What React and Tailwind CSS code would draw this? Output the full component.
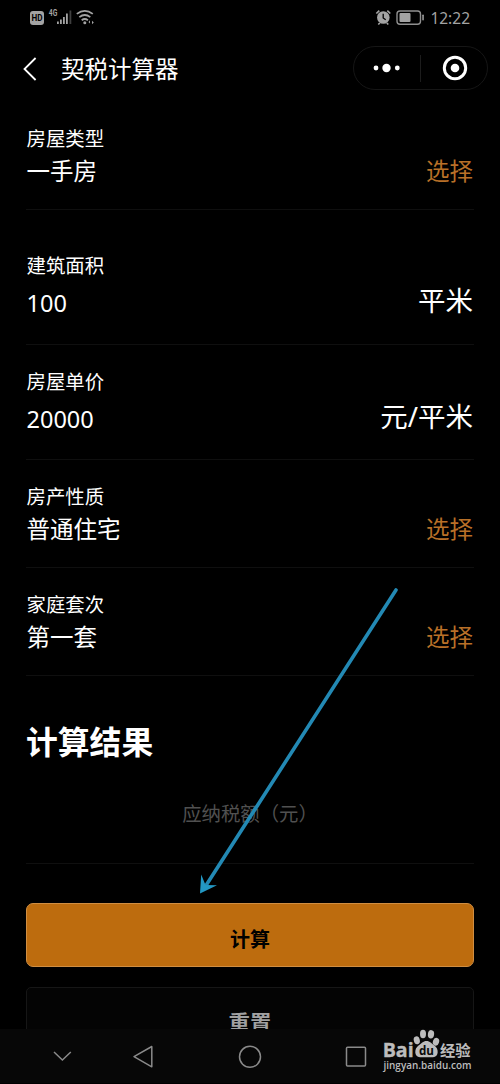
import { useState } from 'react';

const initialFields = [
  { label: '房屋类型', value: '一手房', action: '选择', box: 'pt-[23.5px] pb-[20.5px]' },
  { label: '建筑面积', value: '100', unit: '平米', box: 'pt-[42px] pb-[23px]' },
  { label: '房屋单价', value: '20000', unit: '元/平米', box: 'pt-[23px] pb-[22px]' },
  { label: '房产性质', value: '普通住宅', action: '选择', box: 'pt-[23px] pb-[20px]' },
  { label: '家庭套次', value: '第一套', action: '选择', box: 'pt-[23px] pb-[20px]' },
];

function StatusBar() {
  return (
    <div className="h-9 shrink-0 flex items-center justify-between pl-[30px] pr-[30px]">
      <svg width="66" height="20" viewBox="30 8 66 20" fill="#a3a3a3">
        <rect x="30" y="11" width="14" height="14" rx="3" />
        <text x="31.5" y="21.3" fontSize="9" fontWeight="700" fill="#000" textLength="11" lengthAdjust="spacingAndGlyphs" fontFamily="Roboto">HD</text>
        <text x="48.8" y="16.3" fontSize="9" fontWeight="700" textLength="8.5" lengthAdjust="spacingAndGlyphs" fontFamily="Roboto">4G</text>
        <rect x="57" y="21.5" width="1.8" height="2.5" />
        <rect x="60" y="19.5" width="1.8" height="4.5" />
        <rect x="63" y="17" width="1.8" height="7" />
        <rect x="66" y="13.5" width="1.8" height="10.5" />
        <rect x="69.5" y="10.5" width="1.8" height="13.5" fill="#3f3f3f" />
        <g fill="none" stroke="#a3a3a3" strokeWidth="1.8">
          <path d="M76.8 13.9q8-6 16 0" />
          <path d="M79.3 17.1q5.5-4.2 11 0" />
          <path d="M81.7 20.2q3.1-2.4 6.2 0" />
        </g>
        <circle cx="84.8" cy="22.8" r="1.5" />
        <path d="M90 20.3v3.2l-1.5-1.6zM92 20.8l1.8 1.6-1.8 1.8z" />
      </svg>
      <div className="flex items-center text-[#a3a3a3]">
        <svg width="52" height="18" viewBox="375 9 52 18" fill="#a3a3a3">
          <circle cx="384.3" cy="17.5" r="6.3" />
          <path d="M377.3 13.5l3-2.8M391.3 13.5l-3-2.8M379.3 24.5l1.5-1.5M389.3 24.5l-1.5-1.5" stroke="#a3a3a3" strokeWidth="1.7" />
          <path d="M384.2 13.8v4.2l2.5 1.8" fill="none" stroke="#000" strokeWidth="1.3" />
          <rect x="398" y="11" width="23.5" height="13.2" rx="3" fill="none" stroke="#8f8f8f" strokeWidth="1.4" />
          <rect x="400.5" y="13" width="11" height="9" rx="1" />
          <rect x="423.3" y="14.5" width="1.5" height="6" rx=".7" />
        </svg>
        <span className="ml-1 text-[15.5px] leading-[18px]">12:22</span>
      </div>
    </div>
  );
}

function TitleBar() {
  return (
    <div className="h-[65px] shrink-0 flex items-center pl-[22px] pr-3">
      <svg width="16" height="26" viewBox="0 0 16 26" fill="none" stroke="#fff" strokeWidth="1.8">
        <path d="M13.6 2L2.5 13l11.1 11" />
      </svg>
      <h1 className="ml-[23px] text-[23.5px] leading-9 pt-px">契税计算器</h1>
      <div className="ml-auto w-[135px] h-11 mb-px rounded-full border border-[#161616] flex items-center">
        <svg width="66" height="26" viewBox="0 0 66 26" fill="#fff">
          <circle cx="22" cy="13" r="2.4" />
          <circle cx="32.5" cy="13" r="4.2" />
          <circle cx="43.3" cy="13" r="2.4" />
        </svg>
        <div className="w-px h-[27px] bg-[#1c1c1c]" />
        <svg width="66" height="26" viewBox="0 0 66 26">
          <circle cx="34" cy="13" r="10.7" fill="none" stroke="#fff" strokeWidth="3" />
          <circle cx="34" cy="13" r="4.3" fill="#fff" />
        </svg>
      </div>
    </div>
  );
}

function FieldRow({ field }) {
  return (
    <div className={`border-b border-[#0f0f0f] ${field.box}`}>
      <div className="pl-[0.5px] text-[19.4px] leading-7">{field.label}</div>
      <div className={`flex items-center justify-between pl-[0.5px] pr-px ${field.unit ? 'mt-[5px]' : ''}`}>
        <span className="text-[23.5px] leading-9">{field.value}</span>
        {field.action && (
          <button className="text-[23.5px] leading-9 text-[#b87028]">{field.action}</button>
        )}
        {field.unit && <span className="text-[27.5px] leading-8 pb-[4px]">{field.unit}</span>}
      </div>
    </div>
  );
}

function Watermark() {
  return (
    <svg className="absolute right-[26px] bottom-[8px]" width="92" height="46" viewBox="382 1030 92 46" fill="#bcbcbc">
      <text x="382.7" y="1057.5" fontSize="20" fontWeight="700" textLength="31" lengthAdjust="spacingAndGlyphs" stroke="#bcbcbc" strokeWidth=".4" fontFamily="Open Sans">Bai</text>
      <ellipse cx="416.8" cy="1041.3" rx="3" ry="4" transform="rotate(-15 416.8 1041.3)" />
      <ellipse cx="423" cy="1035" rx="3" ry="4.2" />
      <ellipse cx="431" cy="1035.3" rx="3.1" ry="4.2" transform="rotate(8 431 1035.3)" />
      <ellipse cx="436" cy="1042.8" rx="3.1" ry="4" transform="rotate(18 436 1042.8)" />
      <path d="M426.500 1042c3.500 0 5 2.500 8 4.500 4.500 3.200 4.500 11.300-1.500 11.700-3.500.2-9.500.2-13 0-6-.4-6-8.500-1.500-11.700 3-2 4.500-4.500 8-4.500z" />
      <text x="419" y="1056" fontSize="12" fontWeight="700" fill="#0a0a0a" textLength="15" lengthAdjust="spacingAndGlyphs" fontFamily="Open Sans">du</text>
      <text x="440" y="1056.7" fontSize="15.3" fontWeight="700" fontFamily="Noto Sans CJK SC">经验</text>
      <text x="383.5" y="1069.7" fontSize="11" fontWeight="600" textLength="88" lengthAdjust="spacingAndGlyphs" fontFamily="Open Sans">jingyan.baidu.com</text>
    </svg>
  );
}

function NavBar() {
  return (
    <nav className="relative h-[55px] shrink-0 bg-[#070707] border-b border-black">
      <svg width="500" height="54" viewBox="0 1029 500 54" fill="none" stroke="#8a8a8a" strokeWidth="1.5">
        <path d="M54 1052l8.400 8 8.400-8" />
        <path d="M151.800 1046.500v20.300L134 1056.700z" strokeLinejoin="round" />
        <circle cx="250" cy="1056.8" r="10.5" />
        <rect x="346.5" y="1047.3" width="19" height="18.7" rx="1" />
      </svg>
      <Watermark />
    </nav>
  );
}

export default function App() {
  const [fields] = useState(initialFields);

  return (
    <div className="relative w-[500px] h-[1084px] overflow-hidden bg-black text-white flex flex-col font-['Noto_Sans','Noto_Sans_CJK_SC',sans-serif]">
      <StatusBar />
      <TitleBar />

      <main className="flex-1 min-h-0 overflow-hidden px-[26px]">
        {fields.map(f => <FieldRow key={f.label} field={f} />)}

        {/* result */}
        <section className="pt-[42px] pb-[35px] border-b border-[#0f0f0f]">
          <h2 className="text-[31.8px] leading-[48px] font-bold">计算结果</h2>
          <p className="mt-[34px] text-center text-[19.4px] leading-7 text-[#505050]">应纳税额（元）</p>
        </section>

        <button className="mt-[39px] w-full h-16 block rounded-[7px] border border-[#d08e42] bg-[#bd6c0e] text-black text-[20px] leading-7 font-bold pt-[9px]">
          计算
        </button>
        <button className="mt-5 w-full h-16 block rounded-[5px] border border-[#161616] bg-[#040404] text-[#a0a0a0] text-[21.5px] leading-7 font-bold pt-[7px]">
          重置
        </button>
      </main>

      <NavBar />

      {/* pointer to the calculate button */}
      <svg className="absolute left-[190px] top-[580px] pointer-events-none" width="220" height="320" viewBox="190 580 220 320">
        <path d="M396 590L205 887" stroke="#2389b4" strokeWidth="3.6" strokeLinecap="round" />
        <path d="M200 893.500l1.200-19 4.300 10.500 11.500.2z" fill="#2398c4" />
      </svg>
    </div>
  );
}
